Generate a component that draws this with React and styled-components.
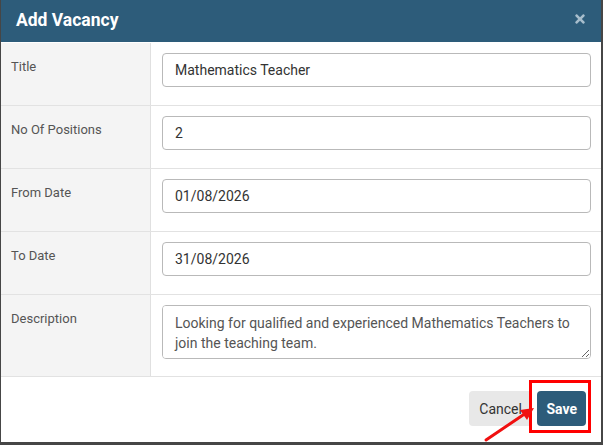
import React from "react";
import styled, { createGlobalStyle } from "styled-components";
import { FaTimes } from "react-icons/fa";

const GlobalStyle = createGlobalStyle`
  html, body {
    margin: 0;
    padding: 0;
    background: #464646;
    font-family: Roboto, "Liberation Sans", Arial, sans-serif;
  }
`;

const fields = [
  { label: "Title", value: "Mathematics Teacher" },
  { label: "No Of Positions", value: "2" },
  { label: "From Date", value: "01/08/2026" },
  { label: "To Date", value: "31/08/2026" },
];

const App = () => {
  return (
    <>
      <GlobalStyle />
      <Modal>
        <Header>
          <Title>Add Vacancy</Title>
          <Close>
            <FaTimes size="14px" />
          </Close>
        </Header>
        <Body>
          {fields.map((f) => (
            <Row key={f.label}>
              <Label>{f.label}</Label>
              <Cell>
                <Input defaultValue={f.value} />
              </Cell>
            </Row>
          ))}
          <Row $tall>
            <Label>Description</Label>
            <Cell>
              <TextArea
                rows={2}
                defaultValue="Looking for qualified and experienced Mathematics Teachers to join the teaching team."
              />
            </Cell>
          </Row>
        </Body>
        <Footer>
          <Button>Cancel</Button>
          <Button $primary>Save</Button>
          <Highlight />
          <Arrow width="60" height="40" viewBox="0 0 60 40">
            <line x1="4" y1="36" x2="44" y2="9" stroke="#f01010" strokeWidth="3" strokeLinecap="round" />
            <polygon points="52,4 38,6 45,16" fill="#f01010" />
          </Arrow>
        </Footer>
      </Modal>
    </>
  );
};

export default App;

const Modal = styled.div`
  position: relative;
  width: 600px;
  height: 442px;
  margin-left: 1px;
  background: #fff;
  display: flex;
  flex-direction: column;
  overflow: hidden;
`;

const Header = styled.div`
  height: 42px;
  flex: none;
  background: #2d5c7a;
  display: flex;
  align-items: center;
  justify-content: space-between;
  padding: 0 14px 0 15px;
  box-sizing: border-box;
`;

const Title = styled.h4`
  margin: 0 0 2px;
  color: #fff;
  font-size: 17.5px;
  font-weight: 700;
`;

const Close = styled.span`
  color: #a7bdcc;
  display: flex;
  margin-bottom: 5px;
`;

const Body = styled.div`
  display: flex;
  flex-direction: column;
  padding-top: 1px;
`;

const Row = styled.div`
  display: grid;
  grid-template-columns: 150px 1fr;
  height: ${(p) => (p.$tall ? "82px" : "63px")};
  border-bottom: 1px solid #e2e2e2;
  box-sizing: border-box;
`;

const Label = styled.div`
  background: #f4f4f4;
  border-right: 1px solid #e0e0e0;
  color: #555;
  font-size: 13px;
  padding: 16px 0 0 10px;
`;

const Cell = styled.div`
  padding: 10px 10px 0 11px;
`;

const Input = styled.input`
  width: 100%;
  height: 34px;
  box-sizing: border-box;
  border: 1px solid #b9b9b9;
  border-radius: 4px;
  padding: 0 12px;
  font-family: inherit;
  font-size: 14px;
  color: #333;
  outline: none;
`;

const TextArea = styled.textarea`
  width: 100%;
  height: 54px;
  box-sizing: border-box;
  border: 1px solid #b9b9b9;
  border-radius: 4px;
  padding: 7px 12px;
  font-family: inherit;
  font-size: 14px;
  line-height: 20px;
  color: #555;
  resize: vertical;
  display: block;
  outline: none;
`;

const Footer = styled.div`
  position: relative;
  flex: 1;
  display: flex;
  justify-content: flex-end;
  align-items: flex-start;
  gap: 5px;
  padding: 14px 15px 0 0;
`;

const Button = styled.button`
  height: 35px;
  padding: 0 ${(p) => (p.$primary ? "9px" : "10.5px")};
  border: none;
  border-radius: 4px;
  font-family: inherit;
  font-size: 14px;
  font-weight: ${(p) => (p.$primary ? 700 : 400)};
  color: ${(p) => (p.$primary ? "#fff" : "#333")};
  background: ${(p) => (p.$primary ? "#2d5c7a" : "#e8e8e8")};
`;

const Highlight = styled.div`
  position: absolute;
  left: 528px;
  top: 3px;
  width: 62px;
  height: 53px;
  box-sizing: border-box;
  border: 3px solid #ff0000;
`;

const Arrow = styled.svg`
  position: absolute;
  left: 481px;
  top: 27px;
`;
